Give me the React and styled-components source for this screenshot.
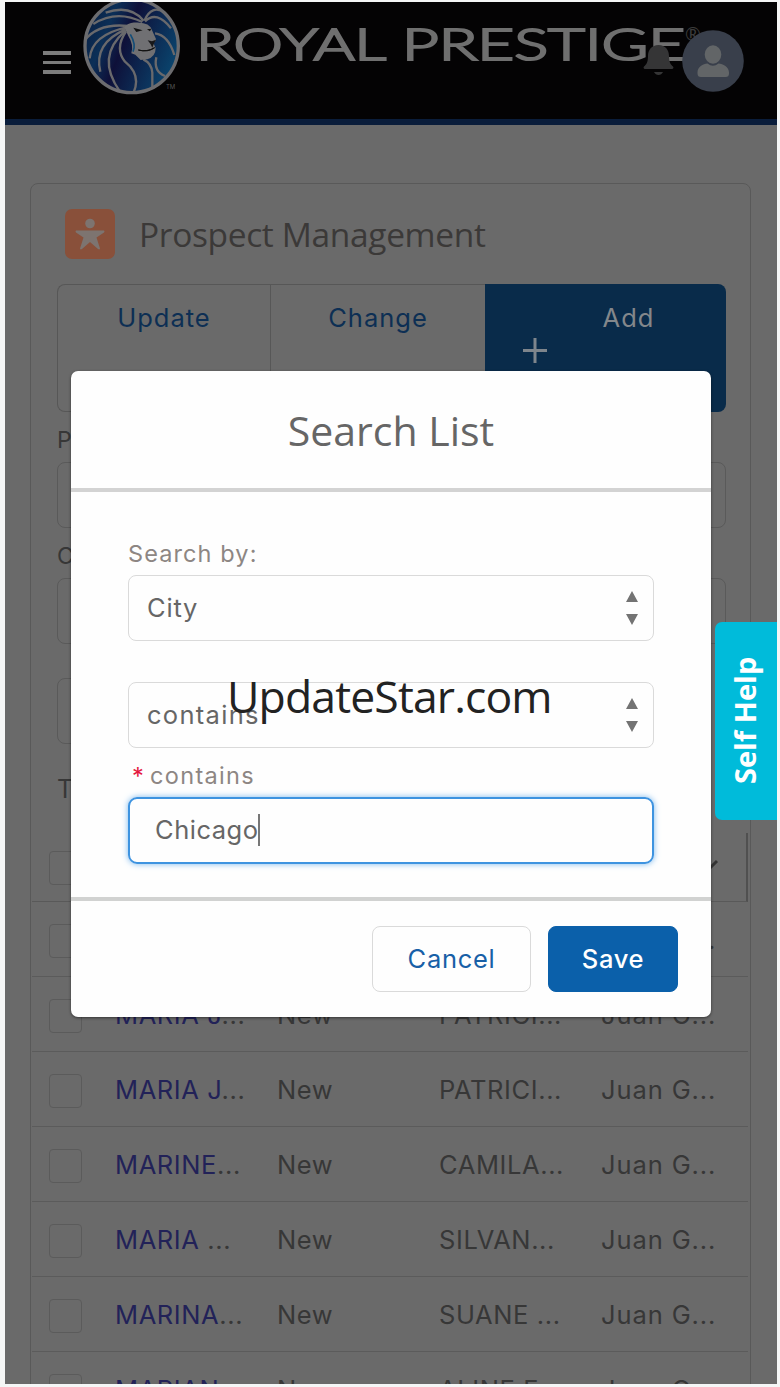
import styled, { createGlobalStyle } from 'styled-components';

const GlobalStyle = createGlobalStyle`
  * {
    box-sizing: border-box;
  }

  body {
    margin: 0;
    background-color: #f5f6f6;
    font-family: Inter, 'Liberation Sans', sans-serif;
    font-size: 25.5px;
    font-weight: 380;
  }

  svg {
    display: block;
  }
`;

const Page = styled.div`
  width: 780px;
  height: 1387px;
  padding: 2px 3px 3px 5px;
  overflow: hidden;
`;

const Screen = styled.div`
  position: relative;
  height: 1382px;
  background-color: #6a6a6a;
  color: #373737;
  overflow: hidden;
`;

const TopBar = styled.header`
  position: relative;
  display: flex;
  align-items: flex-start;
  height: 123px;
  padding-left: 38px;
  background-color: #040304;
  border-bottom: 6px solid #0a1d3b;
`;

const MenuButton = styled.div`
  display: flex;
  flex-direction: column;
  gap: 6px;
  width: 28px;
  margin: 49px 8px 0 0;
`;

const MenuLine = styled.span`
  height: 3.6px;
  background-color: #7c7c7c;
`;

const UserTools = styled.div`
  position: absolute;
  top: 28px;
  right: 33px;
  display: flex;
  align-items: flex-start;
  gap: 8px;

  & > svg:first-child {
    margin-top: 14px;
  }
`;

const Card = styled.section`
  height: 1220px;
  margin: 58px 26px 0 25px;
  border: 1px solid #595959;
  border-radius: 8px;
`;

const CardHeader = styled.div`
  display: flex;
  align-items: center;
  gap: 24px;
  height: 50px;
  margin: 25px 0 25px 34px;
`;

const IconTile = styled.div`
  width: 50px;
  height: 50px;
  border-radius: 7px;
  background-color: #89503a;
`;

const CardTitle = styled.h1`
  margin: 0;
  font-family: 'Open Sans', sans-serif;
  font-size: 33.5px;
  font-weight: 400;
  letter-spacing: -0.35px;
  color: #3b3938;
`;

const Actions = styled.div`
  display: grid;
  grid-template-columns: 213px 215px 241px;
  width: 669px;
  height: 128px;
  margin-left: 26px;
`;

const ActionButton = styled.div`
  padding-top: 17px;
  border: solid #575757;
  border-width: 1px 0 1px 1px;
  border-radius: ${(props) => (props.$first ? '8px 0 0 8px' : '0')};
  color: #0d2f54;
  line-height: 32px;
  letter-spacing: 1px;
  text-align: center;
`;

const AddButton = styled(ActionButton)`
  position: relative;
  padding: 18px 0 0 46px;
  border: none;
  border-radius: 0 8px 8px 0;
  background-color: #092b4a;
  color: #83878b;

  & svg {
    position: absolute;
    left: 38px;
    top: 54px;
  }
`;

const FilterLabel = styled.div`
  height: 50px;
  padding: 13px 0 0 26px;
  font-size: 23px;
  line-height: 30px;
`;

const FilterBox = styled.div`
  width: ${(props) => props.$width || 669}px;
  height: 66px;
  margin-top: ${(props) => props.$top || 0}px;
  margin-left: 26px;
  border: 1px solid #5a5a5a;
  border-radius: 8px;
`;

const TableTitle = styled.div`
  height: 89px;
  padding: 29px 0 0 26px;
  font-size: 25px;
  line-height: 32px;
`;

const Table = styled.div`
  margin: 0 2px 0 1px;
`;

const HeadRow = styled.div`
  display: flex;
  align-items: flex-start;
  justify-content: space-between;
  height: 69px;
  padding: 18px 27px 0 17px;
  border-right: 2px solid #505050;
  border-bottom: 1px solid #595959;

  & svg {
    margin-top: 8px;
  }
`;

const Row = styled.div`
  display: grid;
  grid-template-columns: 66px 162px 162px 162px 1fr;
  height: 75px;
  padding: 22px 0 0 17px;
  border-bottom: 1.5px solid #5b5b5b;
`;

const Checkbox = styled.span`
  width: 33px;
  height: 34px;
  border: 1.5px solid #5b5b5b;
  border-radius: 4px;
`;

const Cell = styled.span`
  line-height: 32px;
  letter-spacing: ${(props) => props.$spacing ?? 0.6}px;
  white-space: nowrap;

  & b {
    font-weight: 380;
    color: #222258;
  }
`;

const Modal = styled.div`
  position: absolute;
  top: 369px;
  left: 66px;
  width: 640px;
  height: 646px;
  border-radius: 7px;
  background-color: #fefefe;
  color: #666;
  box-shadow: 0 1px 3px rgba(0, 0, 0, 0.5);
`;

const ModalHeader = styled.div`
  height: 121px;
  padding-top: 31px;
  border-bottom: 4px solid #d3d3d3;
  font-family: 'Open Sans', sans-serif;
  font-size: 41px;
  font-weight: 400;
  line-height: 56px;
  text-align: center;
`;

const ModalBody = styled.div`
  height: 405px;
  padding: 44px 57.5px 0 57px;
`;

const Label = styled.div`
  height: 39px;
  font-size: 23.5px;
  line-height: 36px;
  letter-spacing: 1.1px;
  color: #8d8683;
`;

const RequiredLabel = styled(Label)`
  height: 49px;
  padding: 10px 0 0 4px;
  letter-spacing: 1.3px;

  & span {
    margin-right: 5px;
    color: #e4173e;
  }
`;

const Select = styled.div`
  display: flex;
  align-items: center;
  justify-content: space-between;
  height: 66px;
  margin-bottom: ${(props) => (props.$spaced ? 41 : 0)}px;
  padding: 0 15px 0 18px;
  border: 1.5px solid #dadada;
  border-radius: 8px;
  letter-spacing: ${(props) => props.$spacing}px;

  & span {
    margin-bottom: 2px;
  }

  & svg {
    margin-bottom: 1px;
  }
`;

const TextInput = styled.div`
  display: flex;
  align-items: center;
  height: 67px;
  padding: 0 0 2px 25px;
  border: 2px solid #3d93e0;
  border-radius: 9px;
  box-shadow: 0 0 6px #7ab8ee;
  letter-spacing: 0.5px;
`;

const Caret = styled.span`
  width: 1.5px;
  height: 32px;
  background-color: #777;
`;

const ModalFooter = styled.div`
  display: flex;
  justify-content: flex-end;
  gap: 17px;
  padding: 25px 33px 0 0;
  border-top: 4px solid #d1d2d1;
`;

const Button = styled.div`
  width: ${(props) => (props.$primary ? 130 : 159)}px;
  height: 66px;
  border: 1.5px solid ${(props) => (props.$primary ? '#0b60aa' : '#dadada')};
  border-radius: 8px;
  background-color: ${(props) => (props.$primary ? '#0b60aa' : '#fefefe')};
  color: ${(props) => (props.$primary ? '#fff' : '#1860a7')};
  font-weight: ${(props) => (props.$primary ? 500 : 400)};
  line-height: 63px;
  letter-spacing: 0.7px;
  text-align: center;
`;

const SelfHelp = styled.div`
  position: absolute;
  top: 620px;
  right: 0;
  display: flex;
  align-items: center;
  justify-content: center;
  width: 62px;
  height: 198px;
  padding: 2px 0 0 4px;
  border-radius: 0 7px 7px 0;
  background-color: #00bbda;
  color: #fff;
  font-family: 'Open Sans', sans-serif;
  font-size: 29px;
  font-weight: 700;
  writing-mode: vertical-rl;
  transform: rotate(180deg);
`;

const Watermark = styled.div`
  position: absolute;
  top: 663px;
  left: 222px;
  color: #222;
  font-family: 'Open Sans', sans-serif;
  font-size: 44.5px;
  font-weight: 400;
  line-height: 62px;
  letter-spacing: -0.85px;
  white-space: nowrap;
`;

const ROWS = [
  { name: 'MARIA A', contact: 'PATRICI...' },
  { name: 'MARIA J', contact: 'PATRICI...' },
  { name: 'MARIA J', contact: 'PATRICI...' },
  { name: 'MARINE', contact: 'CAMILA...' },
  { name: 'MARIA ', contact: 'SILVAN...' },
  { name: 'MARINA', contact: 'SUANE ...' },
  { name: 'MARIAN', contact: 'ALINE F...' },
];

function Logo() {
  return (
    <svg width="625" height="100" viewBox="79 2 625 100">
      <defs>
        <linearGradient id="mane" x1="0" y1="0.2" x2="1" y2="0.6">
          <stop offset="0" stopColor="#0a1f42" />
          <stop offset="0.25" stopColor="#0b2f57" />
          <stop offset="0.45" stopColor="#0e1039" />
          <stop offset="1" stopColor="#0a456e" />
        </linearGradient>
        <clipPath id="disc">
          <circle cx="170" cy="138" r="141" />
        </clipPath>
      </defs>
      <g transform="translate(75 0) scale(0.3333)">
        <circle cx="170" cy="138" r="141" fill="url(#mane)" />
        {/* mane strands */}
        <g clipPath="url(#disc)" fill="none" stroke="#69696c" strokeWidth="7">
          <path d="M28 122Q70 68 160 78M55 72Q125 28 202 66M92 38Q165 12 206 62" />
          <path d="M44 175Q50 105 155 82M76 215Q55 130 152 88M135 275Q60 170 152 92" />
          <path d="M175 280Q200 225 150 185Q118 145 153 95" />
          <path d="M232 262V218Q230 190 205 178M270 228Q235 215 244 172" />
          <path d="M208 62Q230 12 270 38M210 64Q245 30 288 85M240 100Q280 105 298 165" />
        </g>
        <path
          d="M148 82C165 62 188 68 205 70Q219 72 227 82L243 117L240 126L235 128L242 145Q242 170 217 178L197 180L181 164L169 160Q177 135 160 108Z"
          fill="#707073"
        />
        <path d="M175 83L203 91L184 96ZM216 88L229 86L225 94Z" fill="#111" />
        <path d="M218 121L231 124L243 119L236 133L232 143L227 133Z" fill="#171719" />
        <path d="M190 150Q214 157 239 143Q220 158 190 150Z" fill="#111" stroke="#111" strokeWidth="3" />
        <path d="M166 103Q184 133 174 155" fill="none" stroke="#134d78" strokeWidth="5" />
        <circle cx="170" cy="138" r="140" fill="none" stroke="#6c6c6f" strokeWidth="10" />
      </g>
      <text x="166" y="89" fill="#555" fontFamily="Inter, sans-serif" fontSize="6">
        TM
      </text>
      <g
        fill="#6f6f6f"
        stroke="#6f6f6f"
        strokeWidth="2.1"
        fontFamily="Lato, sans-serif"
        fontWeight="300"
        fontSize="42.5"
      >
        <text x="196" y="60" textLength="190" lengthAdjust="spacingAndGlyphs">
          ROYAL
        </text>
        <text x="402" y="60" textLength="283" lengthAdjust="spacingAndGlyphs">
          PRESTIGE
        </text>
      </g>
      <text x="685" y="41" fill="#3b3b3b" fontFamily="Lato, sans-serif" fontSize="19">
        ®
      </text>
    </svg>
  );
}

function Bell() {
  return (
    <svg width="31" height="32" viewBox="0 0 31 32">
      <path
        d="M15.5 1C8.5 1 5 6 5 12C5 18 3.5 20.5 1 22.5C.2 23.2.5 25 2 25H29C30.5 25 30.8 23.2 30 22.5C27.5 20.5 26 18 26 12C26 6 22.5 1 15.5 1ZM11 28H20Q18.5 31 15.5 31Q12.5 31 11 28Z"
        fill="#353536"
      />
    </svg>
  );
}

function Avatar() {
  return (
    <svg width="62" height="62" viewBox="0 0 62 62">
      <circle cx="31" cy="31" r="30.8" fill="#393f4b" />
      <ellipse cx="31" cy="24.5" rx="8.3" ry="9.2" fill="#626567" />
      <path
        d="M15.5 42.5C15.5 37 21 34 25.5 33.6Q31 38 36.5 33.6C41 34 47 37 47 42.5V43.5Q47 47 43.5 47H19Q15.5 47 15.5 43.5Z"
        fill="#626567"
      />
    </svg>
  );
}

function Stepper() {
  return (
    <svg width="12" height="34" viewBox="0 0 12 34">
      <path d="M6 0L12 11H0ZM0 23H12L6 34Z" fill="#737373" />
    </svg>
  );
}

function App() {
  return (
    <Page>
      <GlobalStyle />
      <Screen>
        <TopBar>
          <MenuButton>
            <MenuLine />
            <MenuLine />
            <MenuLine />
          </MenuButton>
          <Logo />
          <UserTools>
            <Bell />
            <Avatar />
          </UserTools>
        </TopBar>

        <Card>
          <CardHeader>
            <IconTile>
              <svg width="50" height="50" viewBox="0 0 50 50">
                <circle cx="25" cy="14.5" r="4.8" fill="#7d7470" />
                <path
                  d="M11 21.5H39Q40 22.5 39 23.5L31.5 28.5L35 39.5Q34.5 41 33 40L25 33L17 40Q15.5 41 15 39.5L18.5 28.5L11 23.5Q10 22.5 11 21.5Z"
                  fill="#7d7470"
                />
              </svg>
            </IconTile>
            <CardTitle>Prospect Management</CardTitle>
          </CardHeader>

          <Actions>
            <ActionButton $first>Update</ActionButton>
            <ActionButton>Change</ActionButton>
            <AddButton>
              <svg width="24" height="25" viewBox="0 0 24 25">
                <path d="M12 0V25M0 12.5H24" stroke="#7e858c" strokeWidth="3" />
              </svg>
              Add
            </AddButton>
          </Actions>

          <FilterLabel>P</FilterLabel>
          <FilterBox />
          <FilterLabel>C</FilterLabel>
          <FilterBox />
          <FilterBox $width={400} $top={34} />
          <TableTitle>T</TableTitle>

          <Table>
            <HeadRow>
              <Checkbox />
              <svg width="24" height="16" viewBox="0 0 24 16">
                <path d="M2 2L12 12L22 2" fill="none" stroke="#343434" strokeWidth="3" />
              </svg>
            </HeadRow>
            {ROWS.map((row, i) => (
              <Row key={i}>
                <Checkbox />
                <Cell>
                  <b>{row.name}</b>...
                </Cell>
                <Cell>New</Cell>
                <Cell>{row.contact}</Cell>
                <Cell $spacing={0.9}>Juan G...</Cell>
              </Row>
            ))}
          </Table>
        </Card>

        <Modal>
          <ModalHeader>Search List</ModalHeader>
          <ModalBody>
            <Label>Search by:</Label>
            <Select $spaced $spacing={0.8}>
              <span>City</span>
              <Stepper />
            </Select>
            <Select $spacing={1.3}>
              <span>contains</span>
              <Stepper />
            </Select>
            <RequiredLabel>
              <span>*</span>contains
            </RequiredLabel>
            <TextInput>
              Chicago
              <Caret />
            </TextInput>
          </ModalBody>
          <ModalFooter>
            <Button>Cancel</Button>
            <Button $primary>Save</Button>
          </ModalFooter>
        </Modal>

        <SelfHelp>Self Help</SelfHelp>
        <Watermark>UpdateStar.com</Watermark>
      </Screen>
    </Page>
  );
}

export default App;
